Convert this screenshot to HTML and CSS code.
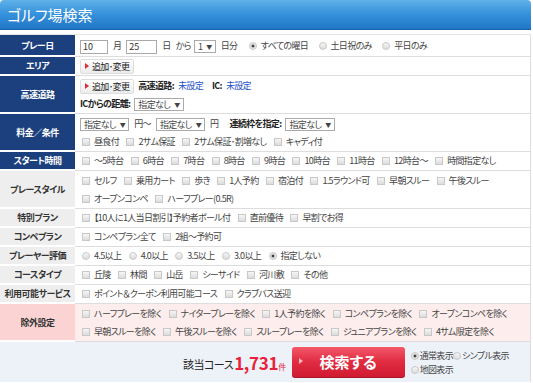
FILE: index.html
```html
<!DOCTYPE html>
<html lang="ja">
<head>
<meta charset="utf-8">
<title>ゴルフ場検索</title>
<link rel="stylesheet" href="styles.css">
</head>
<body>
<div class="search-box">
    <h1 class="ttl">ゴルフ場検索</h1>

    <table class="srch">
        <colgroup><col class="c-th"><col></colgroup>
        <tr class="dark">
            <th>プレー日</th>
            <td class="date">
                <input class="txt" type="text" value="10"><span class="u">月</span><input class="txt w2" type="text" value="25"><span class="u">日</span>から<span class="sel s1">1<i>▼</i></span><span class="u">日分</span>
                <label class="opt"><input type="radio" name="week" checked>すべての曜日</label>
                <label class="opt"><input type="radio" name="week">土日祝のみ</label>
                <label class="opt"><input type="radio" name="week">平日のみ</label>
            </td>
        </tr>
        <tr class="dark">
            <th>エリア</th>
            <td><a class="btn-s" href="#">追加･変更</a></td>
        </tr>
        <tr class="dark">
            <th>高速道路</th>
            <td class="ml">
                <div class="line"><a class="btn-s" href="#">追加･変更</a><b>高速道路:</b><a class="lnk" href="#">未設定</a><b class="ic">IC:</b><a class="lnk" href="#">未設定</a></div>
                <div class="line"><b>ICからの距離:</b><span class="sel">指定なし<i>▼</i></span></div>
            </td>
        </tr>
        <tr class="dark">
            <th>料金／条件</th>
            <td class="ml">
                <div class="line"><span class="sel">指定なし<i>▼</i></span><span class="u">円～</span><span class="sel">指定なし<i>▼</i></span><span class="u">円</span><b class="ic">連続枠を指定:</b><span class="sel">指定なし<i>▼</i></span></div>
                <div class="line">
                    <label class="opt"><input type="checkbox">昼食付</label>
                    <label class="opt"><input type="checkbox">2サム保証</label>
                    <label class="opt"><input type="checkbox">2サム保証･割増なし</label>
                    <label class="opt"><input type="checkbox">キャディ付</label>
                </div>
            </td>
        </tr>
        <tr class="dark">
            <th>スタート時間</th>
            <td>
                <label class="opt"><input type="checkbox">～5時台</label>
                <label class="opt"><input type="checkbox">6時台</label>
                <label class="opt"><input type="checkbox">7時台</label>
                <label class="opt"><input type="checkbox">8時台</label>
                <label class="opt"><input type="checkbox">9時台</label>
                <label class="opt"><input type="checkbox">10時台</label>
                <label class="opt"><input type="checkbox">11時台</label>
                <label class="opt"><input type="checkbox">12時台～</label>
                <label class="opt"><input type="checkbox">時間指定なし</label>
            </td>
        </tr>
        <tr>
            <th>プレースタイル</th>
            <td class="ml">
                <div class="line">
                    <label class="opt"><input type="checkbox">セルフ</label>
                    <label class="opt"><input type="checkbox">乗用カート</label>
                    <label class="opt"><input type="checkbox">歩き</label>
                    <label class="opt"><input type="checkbox">1人予約</label>
                    <label class="opt"><input type="checkbox">宿泊付</label>
                    <label class="opt"><input type="checkbox">1.5ラウンド可</label>
                    <label class="opt"><input type="checkbox">早朝スルー</label>
                    <label class="opt"><input type="checkbox">午後スルー</label>
                </div>
                <div class="line">
                    <label class="opt"><input type="checkbox">オープンコンペ</label>
                    <label class="opt"><input type="checkbox">ハーフプレー(0.5R)</label>
                </div>
            </td>
        </tr>
        <tr>
            <th>特別プラン</th>
            <td>
                <label class="opt"><input type="checkbox">【10人に1人当日割引】予約者ボール付</label>
                <label class="opt"><input type="checkbox">直前優待</label>
                <label class="opt"><input type="checkbox">早割でお得</label>
            </td>
        </tr>
        <tr>
            <th>コンペプラン</th>
            <td>
                <label class="opt"><input type="checkbox">コンペプラン全て</label>
                <label class="opt"><input type="checkbox">2組～予約可</label>
            </td>
        </tr>
        <tr>
            <th>プレーヤー評価</th>
            <td>
                <label class="opt"><input type="radio" name="rate">4.5以上</label>
                <label class="opt"><input type="radio" name="rate">4.0以上</label>
                <label class="opt"><input type="radio" name="rate">3.5以上</label>
                <label class="opt"><input type="radio" name="rate">3.0以上</label>
                <label class="opt"><input type="radio" name="rate" checked>指定しない</label>
            </td>
        </tr>
        <tr>
            <th>コースタイプ</th>
            <td>
                <label class="opt"><input type="checkbox">丘陵</label>
                <label class="opt"><input type="checkbox">林間</label>
                <label class="opt"><input type="checkbox">山岳</label>
                <label class="opt"><input type="checkbox">シーサイド</label>
                <label class="opt"><input type="checkbox">河川敷</label>
                <label class="opt"><input type="checkbox">その他</label>
            </td>
        </tr>
        <tr>
            <th>利用可能サービス</th>
            <td>
                <label class="opt"><input type="checkbox">ポイント＆クーポン利用可能コース</label>
                <label class="opt"><input type="checkbox">クラブバス送迎</label>
            </td>
        </tr>
        <tr class="ex">
            <th>除外設定</th>
            <td class="ml">
                <div class="line">
                    <label class="opt"><input type="checkbox">ハーフプレーを除く</label>
                    <label class="opt"><input type="checkbox">ナイタープレーを除く</label>
                    <label class="opt"><input type="checkbox">1人予約を除く</label>
                    <label class="opt"><input type="checkbox">コンペプランを除く</label>
                    <label class="opt"><input type="checkbox">オープンコンペを除く</label>
                </div>
                <div class="line">
                    <label class="opt"><input type="checkbox">早朝スルーを除く</label>
                    <label class="opt"><input type="checkbox">午後スルーを除く</label>
                    <label class="opt"><input type="checkbox">スループレーを除く</label>
                    <label class="opt"><input type="checkbox">ジュニアプランを除く</label>
                    <label class="opt"><input type="checkbox">4サム限定を除く</label>
                </div>
            </td>
        </tr>
    </table>

    <div class="result">
        <span class="hit">該当コース</span>
        <span class="num">1,731</span><span class="ken">件</span>
        <a class="btn-search" href="#">検索する</a>
        <div class="view">
            <label class="opt"><input type="radio" name="view" checked>通常表示</label><label class="opt"><input type="radio" name="view">シンプル表示</label><br>
            <label class="opt"><input type="radio" name="view">地図表示</label>
        </div>
    </div>
</div>
</body>
</html>
```

FILE: styles.css
```css
body{
    margin:0;
    font-family:"Noto Sans CJK JP", "Liberation Sans", sans-serif;
    font-size:9px;
    letter-spacing:-0.65px;
    color:#444;
    font-feature-settings:"palt";
    background:#fff;
}
.search-box{
    width:531px;
}
.ttl{
    margin:0;
    height:29px;
    padding-left:7px;
    font-size:15px;
    font-weight:normal;
    letter-spacing:0;
    line-height:29px;
    color:#fff;
    background:linear-gradient(#5fb2e9, #3590da 50%, #2176c8);
    border-radius:4px 4px 0 0;
    border-bottom:1px solid #1862ad;
}

/* 検索条件テーブル */
.srch{
    width:531px;
    margin-top:4px;
    table-layout:fixed;
    border-collapse:separate;
    border-spacing:0;
    border-top:1px solid #e4e4e4;
}
.c-th{
    width:75px;
}
.srch th{
    padding:0;
    font-size:9px;
    font-weight:bold;
    letter-spacing:-0.5px;
    text-align:center;
    white-space:nowrap;
    color:#333;
    background:#eee;
    border-bottom:2px solid #fff;
}
.srch tr.dark th{
    color:#fff;
    background:#1c3f7e;
}
.srch tr.ex th{
    background:#fbd3d3;
}
.srch tr.ex td{
    background:#fdeeed;
}
.srch td{
    padding:1px 4px 1px 5px;
    line-height:16px;
    white-space:nowrap;
    overflow:hidden;
    border-bottom:1px solid #ddd;
    border-right:1px solid #ddd;
}
.srch td.ml{
    padding:1px 4px 0 5px;
}
.srch td.date{
    padding:3px 4px 2px 5px;
}
.line{
    height:18px;
    line-height:18px;
}
.u{
    margin:0 5px;
}
b{
    color:#222;
    margin-right:4px;
}
b.ic{
    margin-left:6px;
}
.lnk{
    color:#2451c9;
    text-decoration:none;
    margin-right:3px;
}

/* 入力部品 */
.txt{
    width:24px;
    height:12px;
    padding:0 0 0 2px;
    font-family:inherit;
    font-size:9px;
    color:#333;
    border:1px solid #aaa;
    vertical-align:middle;
}
.txt.w2{
    width:27px;
}
.sel{
    display:inline-block;
    height:11px;
    padding:0 3px 0 3px;
    font-size:9px;
    line-height:11px;
    border:1px solid #aaa;
    background:#fff;
    vertical-align:middle;
}
.sel i{
    font-style:normal;
    font-size:6px;
    margin-left:4px;
    vertical-align:top;
}
.s1{
    margin-left:3px;
}
.btn-s{
    display:inline-block;
    height:13px;
    padding:0 4px 0 11px;
    margin-right:4px;
    position:relative;
    font-size:9px;
    line-height:13px;
    color:#222;
    text-decoration:none;
    border:1px solid #ddd;
    border-radius:2px;
    background:linear-gradient(#fff, #ececec);
    vertical-align:middle;
}
.btn-s:before{
    content:"";
    position:absolute;
    left:4px;
    top:3px;
    border-left:4px solid #e02c3c;
    border-top:3px solid transparent;
    border-bottom:3px solid transparent;
}
.opt{
    margin-right:4px;
    white-space:nowrap;
}
.opt input{
    -webkit-appearance:none;
    appearance:none;
    width:8px;
    height:8px;
    margin:0 4px 0 2px;
    border:1px solid #c8c8c8;
    background:linear-gradient(#f6f6f6, #dcdcdc);
    vertical-align:-1px;
}
.opt input[type=radio]{
    border-radius:50%;
}
.opt input[type=radio]:checked{
    background:radial-gradient(#444 30%, #ddd 40%, #f2f2f2);
}
.date .opt input[type=radio]{
    margin-left:5px;
}

/* 検索結果 */
.result{
    display:flex;
    align-items:center;
    height:40px;
    padding-left:183px;
    background:#edf1f8;
    border-right:1px solid #ddd;
}
.hit{
    font-size:11px;
    letter-spacing:-0.5px;
    color:#222;
    margin-right:1px;
    padding-top:4px;
}
.num{
    font-size:17px;
    font-weight:bold;
    letter-spacing:-0.3px;
    color:#e8213a;
}
.ken{
    font-size:8px;
    color:#e8213a;
    padding-top:8px;
}
.btn-search{
    display:block;
    position:relative;
    width:113px;
    height:30px;
    margin-left:6px;
    font-size:15px;
    font-weight:bold;
    letter-spacing:0;
    line-height:30px;
    text-align:center;
    color:#fff;
    text-decoration:none;
    border-radius:3px;
    background:linear-gradient(#f35869, #e02b41 50%, #cf1a31);
    border-bottom:1px solid #a8182b;
}
.btn-search:before{
    content:"";
    position:absolute;
    left:7px;
    top:11px;
    border-left:4px solid #fbb;
    border-top:3px solid transparent;
    border-bottom:3px solid transparent;
}
.view{
    margin-left:6px;
    line-height:14px;
    padding-top:1px;
    white-space:nowrap;
}
.view .opt{
    margin-right:0;
}
.view .opt input{
    margin:0 1px 0 0;
}
```
